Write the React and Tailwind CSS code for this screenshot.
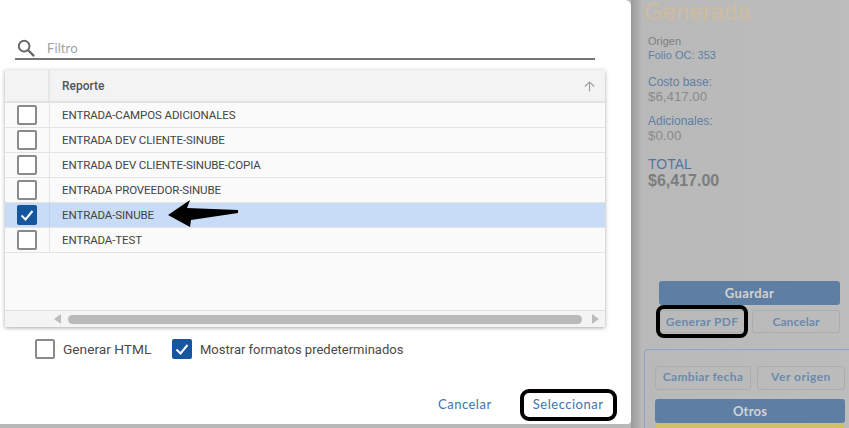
import React from "react";

const T = "font-['Lato','Noto_Sans',sans-serif]";
const N = "font-['Liberation_Sans_Narrow','Roboto',sans-serif]";
const rows = [
  ["ENTRADA-CAMPOS ADICIONALES", false],
  ["ENTRADA DEV CLIENTE-SINUBE", false],
  ["ENTRADA DEV CLIENTE-SINUBE-COPIA", false],
  ["ENTRADA PROVEEDOR-SINUBE", false],
  ["ENTRADA-SINUBE", true],
  ["ENTRADA-TEST", false],
];

function Check({ on }) {
  return on ? (
    <span className="flex h-5 w-5 shrink-0 items-center justify-center rounded-[2px] bg-[#15569f]">
      <svg viewBox="0 0 20 20" className="h-5 w-5" fill="none" stroke="white" strokeWidth="2">
        <path d="M4.5 10.5 L8.5 14.5 L15.5 6" />
      </svg>
    </span>
  ) : (
    <span className="h-5 w-5 shrink-0 rounded-[2px] border-2 border-[#8a8a8a] bg-white" />
  );
}

function Row({ label, on }) {
  return (
    <div className={`flex h-[25px] border-b border-[#e4e4e4] ${on ? "bg-[#c8dcf8]" : "bg-[#fafafa]"}`}>
      <div className={`flex w-[45px] items-center justify-center border-r ${on ? "border-[#bcd0ea]" : "border-[#e4e4e4]"}`}>
        <Check on={on} />
      </div>
      <div className={`${N} flex items-center pl-3 pt-[2px] text-[11.5px] tracking-[-0.1px] text-[#444]`}>{label}</div>
    </div>
  );
}

export default function App() {
  return (
    <div className="relative flex h-[428px] w-[849px] justify-end overflow-hidden bg-[#b9b9b9] font-['Liberation_Sans',sans-serif]">
      {/* Background page, dimmed */}
      <aside className="flex h-full w-[218px] flex-col bg-gradient-to-r from-[#9a9a9a] from-0% via-[#b9b9b9] via-5% to-[#bcbcbc] pl-[13px]">
        <h1 className="text-[24px] leading-[24px] text-[#cfbc9f]">Generada</h1>
        <div className="mt-[10px] pl-1 text-[11px] leading-[14px] text-[#7f7f7f]">Origen</div>
        <div className="pl-1 text-[11px] leading-[14px] text-[#5d7fa5]">Folio OC: 353</div>
        <div className="mt-[13px] pl-1 text-[12px] leading-[14px] text-[#5d7fa5]">Costo base:</div>
        <div className="pl-1 text-[13.3px] leading-[15px] text-[#8a8a8a]">$6,417.00</div>
        <div className="mt-[10px] pl-1 text-[12px] leading-[14px] text-[#5d7fa5]">Adicionales:</div>
        <div className="pl-1 text-[13.3px] leading-[15px] text-[#8a8a8a]">$0.00</div>
        <div className="mt-[14px] pl-1 text-[14px] font-normal leading-[15px] text-[#4f76a3]">TOTAL</div>
        <div className="pl-1 text-[16px] font-bold leading-[18px] text-[#7d7d7d]">$6,417.00</div>

        <div className={`${T} mt-[91px] ml-[15px] w-[181px]`}>
          <button className="block h-6 w-full rounded-[3px] bg-[#5e7fa3] pt-[1px] text-[13px] font-bold tracking-[0.4px] text-[#d2d2d2]">Guardar</button>
          <div className="mt-[5px] flex gap-[7px]">
            <div className="relative h-[23px] w-[86px]">
              <button className="block h-full w-full rounded-[3px] border border-[#adadad] text-[12px] font-bold tracking-[0.3px] text-[#6a8aae]">Generar PDF</button>
              <span className="absolute -inset-x-[3px] -inset-y-[5px] rounded-[8px] border-4 border-black" />
            </div>
            <button className="h-[23px] w-[88px] rounded-[3px] border border-[#adadad] text-[12px] font-bold tracking-[0.1px] text-[#6a8aae]">Cancelar</button>
          </div>
        </div>

        <div className={`${T} mt-[16px] -mr-2 flex-1 rounded-tl-[4px] border border-[#89a5c9] pl-[10px] pt-[16px]`}>
          <div className="flex gap-[6px]">
            <button className="h-[24px] w-[96px] rounded-[3px] border border-[#adadad] pb-[2px] text-[12px] font-bold tracking-[0.3px] text-[#6a8aae]">Cambiar fecha</button>
            <button className="h-[24px] w-[88px] rounded-[3px] border border-[#adadad] pb-[2px] text-[12px] font-bold tracking-[0.5px] text-[#6a8aae]">Ver origen</button>
          </div>
          <button className="mt-[9px] block h-6 w-[190px] rounded-[3px] bg-[#5e7fa3] pt-[1px] text-[13px] font-bold tracking-[0.2px] text-[#d2d2d2]">Otros</button>
          <div className="mt-px ml-px h-1 w-[188px] bg-[#cfc06a]" />
        </div>
      </aside>

      {/* Dialog */}
      <section className="absolute left-0 top-0 flex h-[424px] w-[631px] flex-col rounded-br-[4px] rounded-tr-[6px] bg-white">
        <div className="ml-[15px] mt-[38px] flex h-[22px] w-[580px] items-center border-b-2 border-[#757575]">
          <svg viewBox="0 0 20 20" className="ml-[2px] h-[19px] w-[19px]" fill="none" stroke="#666" strokeWidth="2">
            <circle cx="7.5" cy="7.5" r="5.6" />
            <path d="M11.8 11.8 L18 18" strokeWidth="2.4" />
          </svg>
          <span className={`${T} ml-[11px] mt-[2px] text-[13px] tracking-[0.1px] text-[#a3a3a3]`}>Filtro</span>
        </div>

        <div className="ml-[5px] mt-[10px] flex h-[257px] w-[600px] flex-col bg-[#fafafa] shadow-[0_1px_4px_rgba(0,0,0,0.35)]">
          <div className="flex h-[33px] shrink-0 border-b-2 border-[#e2e2e2] bg-[#f3f3f3]">
            <div className="w-[45px] border-r-2 border-[#e6e6e6]" />
            <div className={`font-['Roboto',sans-serif] flex flex-1 items-center pl-3 text-[12px] font-medium text-[#555]`}>Reporte</div>
            <svg viewBox="0 0 12 12" className="mr-[10px] mt-[11px] h-[11px] w-[11px]" fill="none" stroke="#9a9a9a" strokeWidth="1.2">
              <path d="M6 11.5 V1 M1 6 L6 1 L11 6" />
            </svg>
          </div>
          {rows.map(([l, on]) => (
            <Row key={l} label={l} on={on} />
          ))}
          <div className="flex-1" />
          <div className="flex h-[17px] shrink-0 items-center border-t border-[#e0e0e0] bg-[#f4f4f4] pl-[49px]">
            <span className="h-0 w-0 border-y-[5px] border-r-[7px] border-y-transparent border-r-[#bdbdbd]" />
            <span className="ml-[7px] h-[9px] w-[514px] rounded-full bg-[#b9b9b9]" />
            <span className="ml-[10px] h-0 w-0 border-y-[5px] border-l-[7px] border-y-transparent border-l-[#bdbdbd]" />
          </div>
        </div>

        <div className="ml-[35px] mt-[12px] flex items-center text-[#4a4a4a] font-['Roboto',sans-serif]">
          <Check on={false} />
          <span className="ml-2 w-[88px] whitespace-nowrap text-[13.7px]">Generar HTML</span>
          <span className="ml-[21px]"><Check on /></span>
          <span className="ml-2 text-[13px]">Mostrar formatos predeterminados</span>
        </div>

        <div className={`${T} mt-[29px] ml-[438px] flex items-center text-[13px] tracking-[0.5px] text-[#3d72ad]`}>
          <button>Cancelar</button>
          <button className="ml-[28px] flex h-[32px] w-[97px] items-center justify-center rounded-[9px] border-4 border-black">Seleccionar</button>
        </div>

        {/* annotation arrow */}
        <svg viewBox="0 0 72 30" className="absolute left-[167px] top-[199px] h-[30px] w-[72px]">
          <path d="M1 16 L23 1 L20 9 L71 11 L71 14 L24 21 L23 28 Z" fill="black" />
        </svg>
      </section>
    </div>
  );
}
